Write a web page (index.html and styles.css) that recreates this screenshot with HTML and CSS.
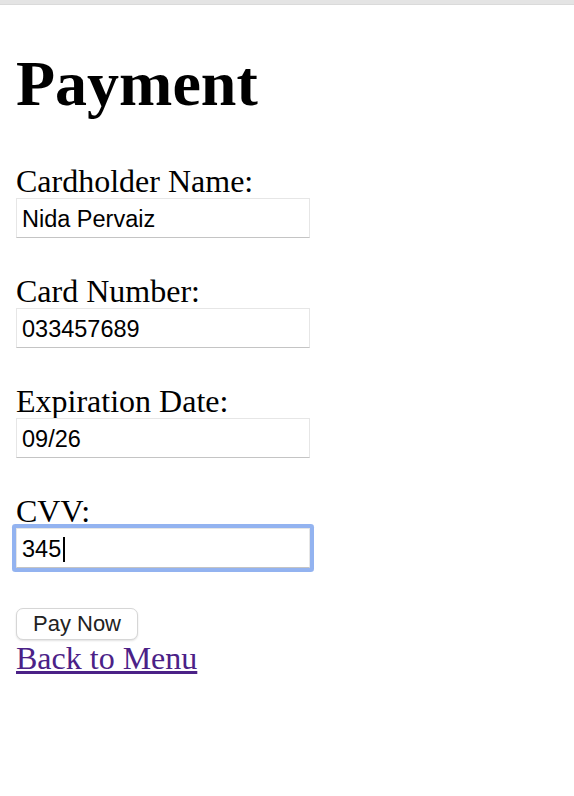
FILE: index.html
```html
<!doctype html>

<html lang="en">
<head>
  <meta charset="utf-8">

  <title>Payment</title>
  <link rel="stylesheet" href="styles.css">
</head>

<body>
    <div class="topBar"></div>
    <div class="page">
        <h1>Payment</h1>
        <form class="payForm" onsubmit="return false;">
            <div class="field">
                <label for="name">Cardholder Name:</label>
                <input type="text" id="name" value="Nida Pervaiz">
            </div>
            <div class="field">
                <label for="number">Card Number:</label>
                <input type="text" id="number" value="033457689">
            </div>
            <div class="field">
                <label for="expiry">Expiration Date:</label>
                <input type="text" id="expiry" value="09/26">
            </div>
            <div class="field">
                <label for="cvv">CVV:</label>
                <div class="inputWrap">
                    <input type="text" id="cvv" class="focused" value="345">
                    <span class="caret"></span>
                </div>
            </div>
            <button type="submit" class="payButton">Pay Now</button>
        </form>
        <a href="#" class="backLink">Back to Menu</a>
    </div>
</body>
</html>
```

FILE: styles.css
```css
body{
    margin: 0;
    font-family: "Liberation Serif", "Times New Roman", serif;
    color: black;
    background: white;
}
.topBar{
    height: 4px;
    background-color: #e4e4e4;
    border-bottom: 1px solid #dadada;
}
.page{
    padding: 0 16px;
}
h1{
    font-size: 64px;
    font-weight: bold;
    margin: 42px 0 44px 0;
}
.payForm{
    display: flex;
    flex-direction: column;
    align-items: flex-start;
    gap: 37px;
}
.field{
    display: flex;
    flex-direction: column;
    align-items: flex-start;
}
.field label{
    font-size: 32px;
    line-height: 33px;
    height: 33px;
}
.field input{
    box-sizing: border-box;
    width: 294px;
    height: 40px;
    margin: 0;
    padding: 2px 5px 0 5px;
    border: 1px solid #e6e6e6;
    border-bottom-color: #c4c4c4;
    border-radius: 0;
    font-family: "Liberation Sans", Arial, sans-serif;
    font-size: 23.5px;
    color: black;
    background: white;
    outline: none;
}
.inputWrap{
    position: relative;
}
.field input.focused{
    border-radius: 1px;
    box-shadow: 0 0 0 4px #93b3f0;
}
.caret{
    position: absolute;
    left: 47px;
    top: 9px;
    width: 2px;
    height: 25px;
    background-color: black;
}
.payButton{
    margin-top: 3px;
    width: 122px;
    height: 32px;
    padding: 0;
    background: white;
    border: 1px solid #d6d6d6;
    border-radius: 7px;
    box-shadow: 0 1px 2px rgba(0,0,0,0.12);
    font-family: "Liberation Sans", Arial, sans-serif;
    font-size: 22px;
    color: #222;
}
.backLink{
    display: inline-block;
    font-size: 32px;
    line-height: 36px;
    color: #4b2187;
}
```
